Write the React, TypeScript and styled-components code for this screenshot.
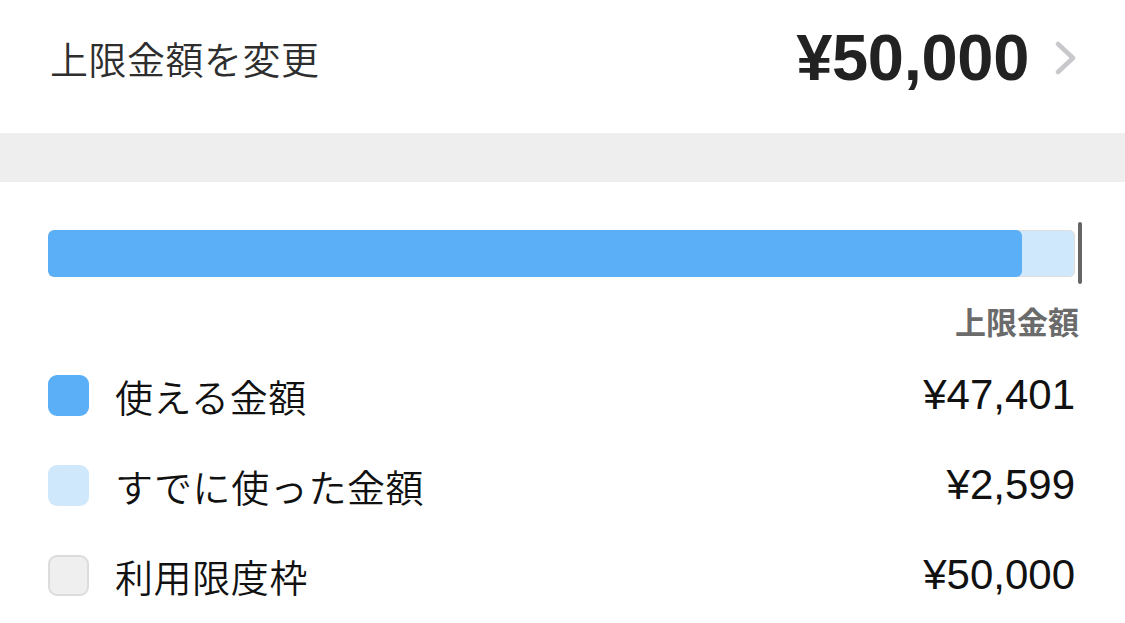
import React from "react";
import styled, { createGlobalStyle } from "styled-components";

const GlobalStyle = createGlobalStyle`
  html, body {
    margin: 0;
    padding: 0;
    background: #ffffff;
  }
  body {
    font-family: "Liberation Sans", "Noto Sans CJK JP", sans-serif;
    -webkit-font-smoothing: antialiased;
  }
`;

const Page = styled.div`
  width: 1125px;
  min-height: 623px;
  background: #ffffff;
  overflow: hidden;
`;

const Header = styled.div`
  height: 133px;
  box-sizing: border-box;
  padding: 0 48px 18px 50px;
  display: flex;
  align-items: center;
  justify-content: space-between;
`;

const HeaderTitle = styled.div`
  font-family: "Noto Sans CJK JP", sans-serif;
  font-size: 38px;
  font-weight: 350;
  color: #2e2e2e;
  letter-spacing: 0.5px;
`;

const HeaderValue = styled.button`
  display: flex;
  align-items: center;
  gap: 26px;
  border: none;
  background: none;
  padding: 0;
  cursor: pointer;
`;

const BigAmount = styled.span`
  font-family: "Liberation Sans", sans-serif;
  font-size: 65px;
  font-weight: 700;
  color: #222222;
  letter-spacing: -0.3px;
`;

const Divider = styled.div`
  height: 49px;
  background: #eeeeee;
`;

const Chart = styled.section`
  padding: 40px 48px 0 48px;
`;

const BarWrap = styled.div`
  position: relative;
  height: 62px;
  display: flex;
  align-items: center;
`;

const Track = styled.div`
  position: relative;
  width: 1027px;
  height: 47px;
  box-sizing: border-box;
  border-radius: 6px;
  background: #d0e8fb;
  box-shadow: inset 0 0 0 1px #dedede;
  overflow: hidden;
`;

const Fill = styled.div`
  height: 100%;
  border-radius: 6px;
  background: #5aaff7;
`;

const LimitMarker = styled.div`
  position: absolute;
  right: -5px;
  top: 0;
  width: 4px;
  height: 62px;
  border-radius: 2px;
  background: #666666;
`;

const LimitLabel = styled.div`
  margin-top: 19px;
  margin-right: -2px;
  text-align: right;
  font-family: "Noto Sans CJK JP", sans-serif;
  font-size: 31px;
  font-weight: 700;
  line-height: 36px;
  color: #6b6b6b;
`;

const Legend = styled.ul`
  list-style: none;
  margin: 11px 0 0 0;
  padding: 0;
`;

const LegendRow = styled.li`
  height: 90px;
  display: flex;
  align-items: center;
`;

const Swatch = styled.span<{ $color: string; $border?: string }>`
  width: 41px;
  height: 41px;
  box-sizing: border-box;
  border-radius: 9px;
  background: ${(p) => p.$color};
  border: ${(p) => (p.$border ? `2px solid ${p.$border}` : "none")};
  flex-shrink: 0;
`;

const LegendLabel = styled.span`
  margin-left: 26px;
  flex: 1;
  font-family: "Noto Sans CJK JP", sans-serif;
  font-size: 38px;
  font-weight: 350;
  color: #111111;
  letter-spacing: 0.6px;
`;

const LegendValue = styled.span`
  font-family: "Liberation Sans", sans-serif;
  font-size: 42px;
  font-weight: 400;
  color: #111111;
  margin-right: 2px;
`;

const Chevron = () => (
  <svg width="22" height="34" viewBox="0 0 22 34" fill="none">
    <path
      d="M3 3 L18 17 L3 31"
      stroke="#c7c7cc"
      strokeWidth="4.5"
      strokeLinecap="round"
      strokeLinejoin="round"
    />
  </svg>
);

type Item = {
  label: string;
  value: string;
  color: string;
  border?: string;
};

const items: Item[] = [
  { label: "使える金額", value: "¥47,401", color: "#5aaff7" },
  { label: "すでに使った金額", value: "¥2,599", color: "#d0e8fb" },
  { label: "利用限度枠", value: "¥50,000", color: "#efefef", border: "#dcdcdc" },
];

const limit = 50000;
const available = 47401;

export default function App() {
  const pct = (available / limit) * 100;
  return (
    <Page>
      <GlobalStyle />
      <Header>
        <HeaderTitle>上限金額を変更</HeaderTitle>
        <HeaderValue>
          <BigAmount>¥50,000</BigAmount>
          <Chevron />
        </HeaderValue>
      </Header>
      <Divider />
      <Chart>
        <BarWrap>
          <Track>
            <Fill style={{ width: `${pct}%` }} />
          </Track>
          <LimitMarker />
        </BarWrap>
        <LimitLabel>上限金額</LimitLabel>
        <Legend>
          {items.map((it) => (
            <LegendRow key={it.label}>
              <Swatch $color={it.color} $border={it.border} />
              <LegendLabel>{it.label}</LegendLabel>
              <LegendValue>{it.value}</LegendValue>
            </LegendRow>
          ))}
        </Legend>
      </Chart>
    </Page>
  );
}
